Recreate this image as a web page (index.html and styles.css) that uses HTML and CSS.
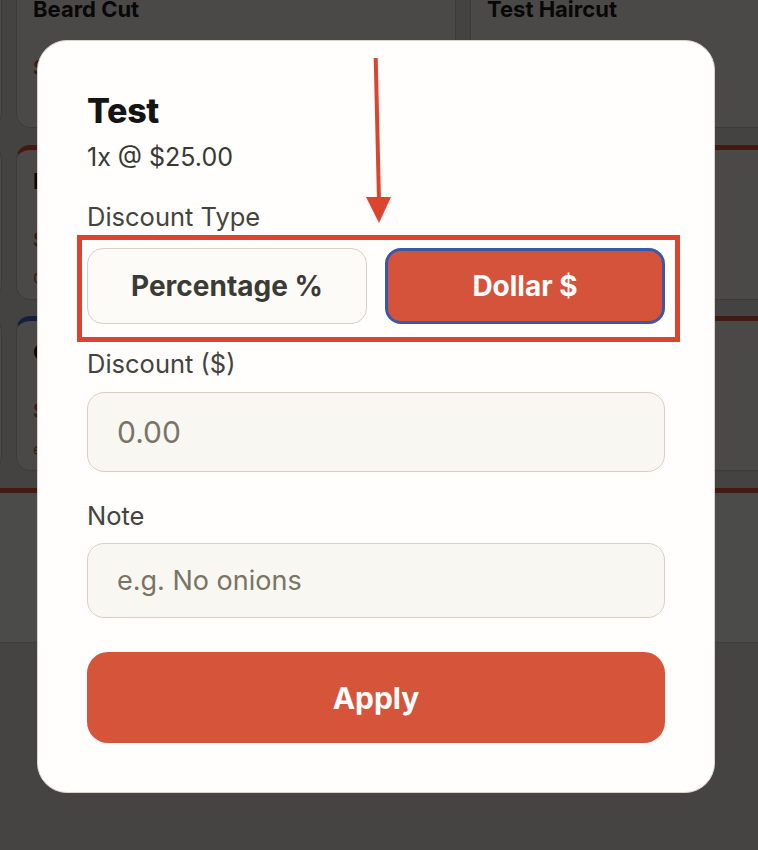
FILE: index.html
```html
<!DOCTYPE html>
<html lang="en">
<head>
<meta charset="utf-8">
<title>Line item discount</title>
<link rel="stylesheet" href="styles.css">
</head>
<body>
<div class="page">
  <div class="menu-grid">
    <div class="card"><div class="card-title">Kids Cut</div><div class="card-price">$18.00</div></div>
    <div class="card"><div class="card-title">Beard Cut</div><div class="card-price">$15.00</div></div>
    <div class="card"><div class="card-title">Test Haircut</div></div>

    <div class="card top-red"><div class="card-title">Fade</div><div class="card-price">$35.00</div><div class="card-tag">Clipper</div></div>
    <div class="card top-red"><div class="card-title">Lineup</div><div class="card-price">$12.00</div><div class="card-tag">Clipper</div></div>
    <div class="card top-red"></div>

    <div class="card top-blue"><div class="card-title">Color</div><div class="card-price">$60.00</div><div class="card-tag">extra</div></div>
    <div class="card top-blue"><div class="card-title">Color Touch</div><div class="card-price">$40.00</div><div class="card-tag">extra</div></div>
    <div class="card top-red"></div>
  </div>
  <div class="cart-panel"></div>
  <div class="footer"></div>
</div>

<div class="overlay">
  <div class="modal">
    <svg class="arrow" viewBox="0 0 60 180" width="60" height="180" aria-hidden="true">
      <line x1="17.7" y1="7" x2="21" y2="150" stroke="#dc4430" stroke-width="4"/>
      <polygon points="8,146 33,146 21,172" fill="#dc4430"/>
    </svg>
    <h2 class="title">Test</h2>
    <p class="meta">1x @ $25.00</p>
    <div class="label label-type">Discount Type</div>
    <div class="type-row">
      <button class="type-btn">Percentage %</button>
      <button class="type-btn active">Dollar $</button>
      <div class="highlight-box"></div>
    </div>
    <div class="label label-discount">Discount ($)</div>
    <input class="field field-amount" type="text" placeholder="0.00">
    <div class="label label-note">Note</div>
    <input class="field field-note" type="text" placeholder="e.g. No onions">
    <button class="apply">Apply</button>
  </div>
</div>
</body>
</html>
```
FILE: styles.css
```css
* { box-sizing: border-box; }

html, body {
  margin: 0;
  padding: 0;
  width: 758px;
  height: 850px;
  overflow: hidden;
  font-family: Inter, "Liberation Sans", sans-serif;
  background: #e8e2da;
}

.page {
  height: 850px;
  overflow: hidden;
}

.menu-grid {
  display: grid;
  grid-template-columns: repeat(3, 440px);
  grid-auto-rows: 155px;
  column-gap: 14px;
  row-gap: 16.5px;
  width: max-content;
  margin: -27px 0 0 -438px;
}

.card {
  background: #f7f3ee;
  border: 1px solid #cdc6bb;
  border-radius: 14px;
  padding: 22px 16px 12px;
}

.card.top-red { border-top: 5px solid #e4543c; padding-top: 18px; }
.card.top-blue { border-top: 5px solid #3d6bd0; padding-top: 18px; }

.card-title {
  font-size: 22px;
  font-weight: 700;
  color: #1b1b1b;
  line-height: 26px;
}

.card-price {
  margin-top: 34px;
  font-size: 20px;
  font-weight: 600;
  color: #d6533b;
}

.card-tag {
  margin-top: 16px;
  font-size: 16px;
  color: #d6533b;
}

.cart-panel {
  margin-top: 17px;
  height: 155px;
  background: #fcfaf7;
  border-top: 5px solid #e4543c;
  border-bottom: 1px solid #d4cec4;
}

.footer {
  height: 220px;
  background: #ebe5dd;
}

/* overlay + modal */
.overlay {
  position: fixed;
  inset: 0;
  background: rgba(0, 0, 0, 0.7);
  display: flex;
  align-items: flex-start;
  padding: 40px 0 0 37px;
}

.modal {
  position: relative;
  width: 678px;
  background: #fffefc;
  border: 1px solid #d9d5cc;
  border-radius: 30px;
  padding: 50px 49px 49px;
  display: flex;
  flex-direction: column;
}

.arrow {
  position: absolute;
  left: 320px;
  top: 10px;
}

.title {
  margin: 0;
  font-size: 34px;
  line-height: 40px;
  font-weight: 800;
  color: #141414;
  letter-spacing: -0.3px;
}

.meta {
  margin: 11px 0 0;
  font-size: 25px;
  line-height: 30px;
  color: #3a3833;
}

.label {
  font-size: 25.5px;
  line-height: 30px;
  color: #45433e;
}

.label-type { margin-top: 30px; }
.label-discount { margin-top: 24.5px; }
.label-note { margin-top: 28.5px; }

.type-row {
  position: relative;
  margin-top: 16px;
  display: grid;
  grid-template-columns: 1fr 1fr;
  column-gap: 18px;
  height: 76px;
}

.type-btn {
  font-family: inherit;
  font-size: 28px;
  font-weight: 700;
  color: #3c3a35;
  background: #fcfbf7;
  border: 1.5px solid #d5d0c4;
  border-radius: 16px;
  padding: 0;
}

.type-btn.active {
  background: #d6533b;
  color: #ffffff;
  border: 3.5px solid #3b58a6;
}

.highlight-box {
  position: absolute;
  left: -10px;
  top: -13px;
  right: -15px;
  bottom: -18px;
  border: 5px solid #dc4430;
  pointer-events: none;
}

.field {
  display: block;
  width: 100%;
  font-family: inherit;
  background: #f9f7f2;
  border: 1.5px solid #d6d1c5;
  border-radius: 17px;
  padding: 0 0 0 29px;
  color: #3a3833;
  outline: none;
}

.field::placeholder { color: #7a7467; opacity: 1; }

.field-amount {
  margin-top: 13.5px;
  height: 80px;
  font-size: 30px;
}

.field-note {
  margin-top: 12.5px;
  height: 75px;
  font-size: 27px;
}

.apply {
  margin-top: 34px;
  height: 91px;
  width: 100%;
  font-family: inherit;
  font-size: 30px;
  font-weight: 700;
  color: #ffffff;
  background: #d6553a;
  border: none;
  border-radius: 21px;
}
```
